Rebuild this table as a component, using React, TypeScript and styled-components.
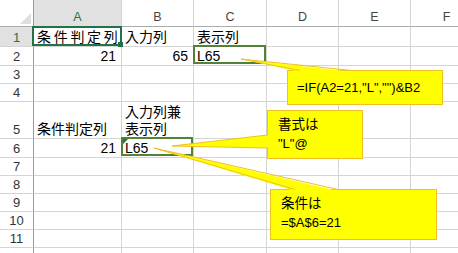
import React from 'react';
import styled, { createGlobalStyle, css } from 'styled-components';

const GlobalStyle = createGlobalStyle`
  html, body { margin: 0; padding: 0; background: #ffffff; }
  body { font-family: "Liberation Sans", "Noto Sans CJK JP", sans-serif; }
`;

const COLS = [34, 88, 72, 73, 72, 72, 72];
const ROWS = [27, 20, 19, 18, 18, 37, 19, 18, 18, 18, 18, 18, 18];
const LETTERS = ['A', 'B', 'C', 'D', 'E', 'F'];
const LAST_LABELLED_ROW = 11;

type Align = 'left' | 'right' | 'distributed';
type Mark = 'active' | 'outline';
type CellDef = { text: React.ReactNode; align?: Align; mark?: Mark; flag?: boolean };

const DATA: Record<string, CellDef> = {
  '1A': { text: '条件判定列', align: 'distributed', mark: 'active' },
  '1B': { text: '入力列' },
  '1C': { text: '表示列' },
  '2A': { text: '21', align: 'right' },
  '2B': { text: '65', align: 'right' },
  '2C': { text: 'L65', mark: 'outline' },
  '5A': { text: '条件判定列' },
  '5B': { text: (<>入力列兼<br />表示列</>) },
  '6A': { text: '21', align: 'right' },
  '6B': { text: 'L65', mark: 'outline', flag: true },
};

const BORDER = '#f0c020';
const FILL = '#ffff00';

const Sheet = styled.div`
  position: relative;
  width: 458px;
  height: 253px;
  overflow: hidden;
  background: #ffffff;
`;

const Grid = styled.div<{ $cols: string; $rows: string }>`
  display: grid;
  grid-template-columns: ${p => p.$cols};
  grid-template-rows: ${p => p.$rows};
  width: max-content;
`;

const Corner = styled.div`
  position: relative;
  border-right: 1px solid #9b9b9b;
  border-bottom: 1px solid #ababab;
  background: #ffffff;
  &::after {
    content: '';
    position: absolute;
    right: 2px;
    bottom: 2px;
    width: 0;
    height: 0;
    border-left: 11px solid transparent;
    border-bottom: 11px solid #dfdfdf;
  }
`;

const ColHeader = styled.div<{ $selected?: boolean }>`
  display: flex;
  align-items: flex-end;
  justify-content: center;
  padding-bottom: 1px;
  border-right: 1px solid #d4d4d4;
  border-bottom: 1px solid #ababab;
  background: ${p => (p.$selected ? '#e1e1e1' : '#ffffff')};
  color: ${p => (p.$selected ? '#217346' : '#444444')};
  font-size: 12.5px;
  line-height: 15px;
`;

const RowHeader = styled.div<{ $selected?: boolean }>`
  display: flex;
  align-items: flex-end;
  justify-content: center;
  padding-bottom: 1px;
  border-right: 1px solid #9b9b9b;
  border-bottom: 1px solid #d4d4d4;
  background: ${p => (p.$selected ? '#e1e1e1' : '#ffffff')};
  color: ${p => (p.$selected ? '#217346' : '#333333')};
  font-size: 13px;
  line-height: 15px;
`;

const Cell = styled.div<{ $mark?: Mark; $flag?: boolean; $align: Align }>`
  position: relative;
  display: flex;
  flex-direction: column;
  justify-content: flex-end;
  min-width: 0;
  border-right: 1px solid #d4d4d4;
  border-bottom: 1px solid #d4d4d4;
  padding: ${p => (p.$align === 'distributed' ? '0 0 0 3px' : '0 5px 0 3px')};
  font-size: 14px;
  line-height: 17px;
  color: #000000;
  white-space: nowrap;
  ${p =>
    p.$mark === 'active' &&
    css`
      z-index: 1;
      &::after {
        content: '';
        position: absolute;
        top: -1px;
        left: -2px;
        right: -1px;
        bottom: 0;
        border: 2px solid #217346;
      }
      &::before {
        content: '';
        position: absolute;
        right: -2px;
        bottom: -1px;
        width: 5px;
        height: 5px;
        background: #217346;
        z-index: 2;
      }
    `}
  ${p =>
    p.$mark === 'outline' &&
    css`
      z-index: 1;
      &::after {
        content: '';
        position: absolute;
        top: -2px;
        left: -1px;
        right: 0;
        bottom: 1px;
        border: 2px solid #538135;
      }
    `}
  ${p =>
    p.$flag &&
    css`
      &::before {
        content: '';
        position: absolute;
        top: 0;
        left: 1px;
        width: 0;
        height: 0;
        border-top: 5px solid #1e7b34;
        border-right: 5px solid transparent;
        z-index: 2;
      }
    `}
`;

const CellText = styled.div<{ $align: Align }>`
  text-align: ${p => (p.$align === 'right' ? 'right' : 'left')};
  ${p =>
    p.$align === 'distributed' &&
    css`
      letter-spacing: 2.7px;
    `}
`;

const Callout = styled.div<{ $x: number; $y: number; $w: number; $h: number; $center?: boolean }>`
  position: absolute;
  left: ${p => p.$x}px;
  top: ${p => p.$y}px;
  width: ${p => p.$w}px;
  height: ${p => p.$h}px;
  box-sizing: border-box;
  background: ${FILL};
  border: 1px solid ${BORDER};
  z-index: 3;
  color: #000000;
  font-size: 13px;
  line-height: 19px;
  white-space: nowrap;
  ${p =>
    p.$center
      ? css`
          display: flex;
          align-items: center;
          padding: 0 0 1px 9px;
        `
      : css`
          padding: 4px 0 0 10px;
        `}
`;

const Jp = styled.span`
  font-family: "Noto Sans CJK JP", sans-serif;
  font-size: 13.5px;
  line-height: 1;
`;

const Pointers = styled.svg`
  position: absolute;
  left: 0;
  top: 0;
  width: 458px;
  height: 253px;
  pointer-events: none;
  z-index: 4;
`;

type Wedge = { fill: string; stroke: string };
const WEDGES: Wedge[] = [
  { fill: '241,59 300,72 352,72', stroke: '300,70.5 241,59 352,70.5' },
  { fill: '172,146 269,135 269,148', stroke: '267.5,135 172,146 267.5,148' },
  { fill: '154,148 295,191 338,191', stroke: '295,189.5 154,148 338,189.5' },
];

export default function App() {
  const rowCount = ROWS.length - 1;
  return (
    <>
      <GlobalStyle />
      <Sheet>
        <Grid $cols={COLS.map(c => `${c}px`).join(' ')} $rows={ROWS.map(r => `${r}px`).join(' ')}>
          <Corner />
          {LETTERS.map(l => (
            <ColHeader key={l} $selected={l === 'A'}>
              {l}
            </ColHeader>
          ))}
          {Array.from({ length: rowCount }, (_, i) => i + 1).map(r => (
            <React.Fragment key={r}>
              <RowHeader $selected={r === 1}>{r <= LAST_LABELLED_ROW ? r : null}</RowHeader>
              {LETTERS.map(l => {
                const d = DATA[`${r}${l}`];
                const align: Align = d?.align ?? 'left';
                return (
                  <Cell key={l} $mark={d?.mark} $flag={d?.flag} $align={align}>
                    {d && <CellText $align={align}>{d.text}</CellText>}
                  </Cell>
                );
              })}
            </React.Fragment>
          ))}
        </Grid>

        <Callout $x={287} $y={70} $w={156} $h={35} $center>
          =IF(A2=21,"L","")&amp;B2
        </Callout>
        <Callout $x={267} $y={110} $w={96} $h={49}>
          <Jp>書式は</Jp>
          <br />
          "L"@
        </Callout>
        <Callout $x={270} $y={189} $w={167} $h={51}>
          <Jp>条件は</Jp>
          <br />
          =$A$6=21
        </Callout>

        <Pointers viewBox="0 0 458 253">
          {WEDGES.map((w, i) => (
            <g key={i}>
              <polygon points={w.fill} fill={FILL} />
              <polyline points={w.stroke} fill="none" stroke={BORDER} strokeWidth={1} />
            </g>
          ))}
        </Pointers>
      </Sheet>
    </>
  );
}
